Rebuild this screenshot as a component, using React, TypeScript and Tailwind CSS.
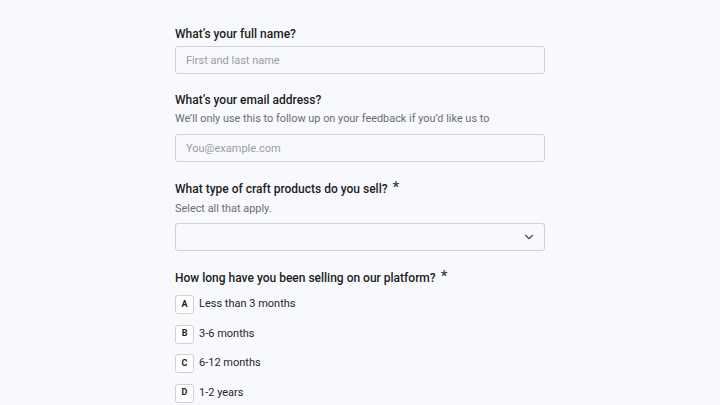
import { ChevronDown } from 'lucide-react'

const options = [
  { key: 'A', label: 'Less than 3 months' },
  { key: 'B', label: '3-6 months' },
  { key: 'C', label: '6-12 months' },
  { key: 'D', label: '1-2 years' },
]

function Title({ children, required }: { children: React.ReactNode; required?: boolean }) {
  return (
    <div className="text-[12px] font-medium text-[#1c1d22] leading-[18px] flex items-start">
      <span>{children}</span>
      {required && <span className="ml-[5px] text-[15px] leading-[14px] text-[#3a3b40]">*</span>}
    </div>
  )
}

export default function App() {
  return (
    <div
      className="min-h-screen w-full bg-[#f8f9fc] flex justify-center overflow-hidden"
      style={{ fontFamily: 'Roboto, "Noto Sans", sans-serif' }}
    >
      <div className="w-[370px] pt-[25px] flex flex-col">
        <Title>What&rsquo;s your full name?</Title>
        <input
          className="mt-[3px] h-[28px] w-full rounded-[3px] border border-[#cfd1d6] bg-[#f8f9fc] px-[10px] text-[11px] text-[#1c1d22] placeholder:text-[#9a9ca3] outline-none"
          placeholder="First and last name"
        />

        <div className="mt-[17px]">
          <Title>What&rsquo;s your email address?</Title>
        </div>
        <div className="mt-[2px] text-[10.9px] leading-[16px] text-[#6b6d74]">
          We&rsquo;ll only use this to follow up on your feedback if you&rsquo;d like us to
        </div>
        <input
          className="mt-[7px] h-[28px] w-full rounded-[3px] border border-[#cfd1d6] bg-[#f8f9fc] px-[10px] text-[11px] text-[#1c1d22] placeholder:text-[#9a9ca3] outline-none"
          placeholder="You@example.com"
        />

        <div className="mt-[18px]">
          <Title required>What type of craft products do you sell?</Title>
        </div>
        <div className="mt-[3px] text-[10.9px] leading-[16px] text-[#6b6d74]">Select all that apply.</div>
        <div className="mt-[6px] h-[28px] w-full rounded-[3px] border border-[#cfd1d6] flex items-center justify-end pr-[8px]">
          <ChevronDown className="w-[14px] h-[14px] text-[#4a4c52]" strokeWidth={2} />
        </div>

        <div className="mt-[18px]">
          <Title required>How long have you been selling on our platform?</Title>
        </div>
        <div className="mt-[8px] flex flex-col gap-[10.5px]">
          {options.map((o) => (
            <div key={o.key} className="flex items-center gap-[5px]">
              <div className="w-[19px] h-[19px] rounded-[3px] border border-[#cfd1d6] bg-white flex items-center justify-center text-[9px] font-bold text-[#1c1d22]">
                {o.key}
              </div>
              <span className="text-[11px] text-[#25262b]">{o.label}</span>
            </div>
          ))}
        </div>
      </div>
    </div>
  )
}
